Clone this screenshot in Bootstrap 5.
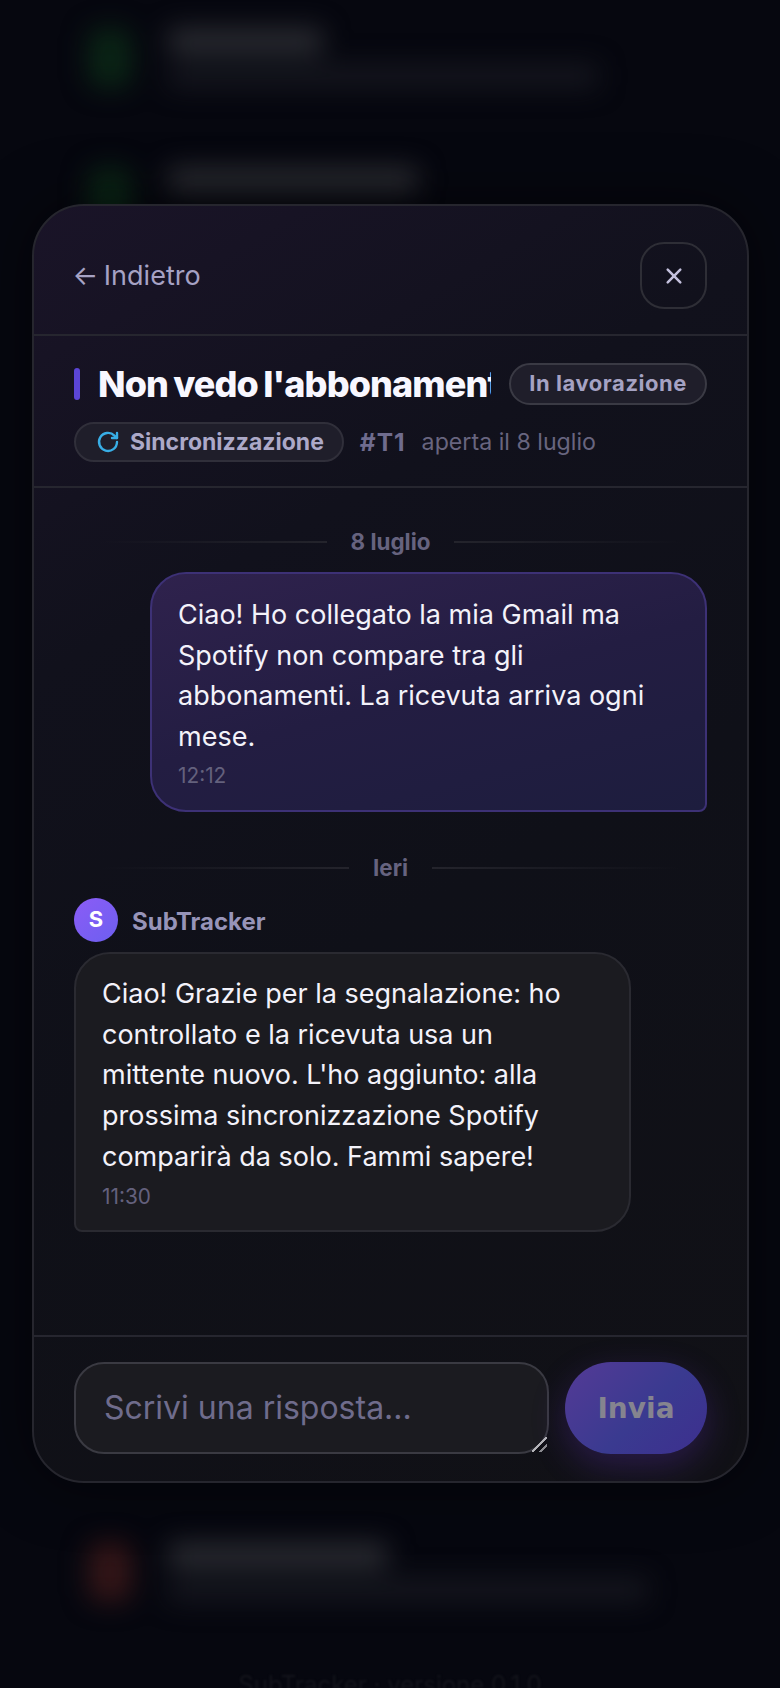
<!doctype html>
<html lang="it">
<head>
<meta charset="utf-8">
<title>SubTracker</title>
<link href="https://cdn.jsdelivr.net/npm/bootstrap@5.3.0/dist/css/bootstrap.min.css" rel="stylesheet">
<style>
html,body{height:100%;}
body{background:#06070f;font-family:"Inter","Noto Sans",sans-serif;color:#f4f3fb;overflow:hidden;}
.stage{width:780px;height:1688px;overflow:hidden;}
.behind{height:1688px;padding:28px 88px 0;filter:blur(13px);}
.b-row{gap:36px;height:76px;margin-bottom:63px;}
.b-icon{width:44px;height:60px;border-radius:14px;background:#0a2415;flex:none;}
.b-icon-red{background:#331517;}
.b-title{height:26px;background:#2a2b31;border-radius:6px;margin-bottom:10px;}
.b-sub{height:24px;background:#15161e;border-radius:6px;}
.b-spacer{height:1236px;}
.b-foot{position:absolute;left:0;right:0;top:1667px;text-align:center;font-size:24px;color:#13141b;filter:blur(1px);}
.overlay{position:absolute;left:32px;top:204px;width:717px;height:1279px;border-radius:52px;border:2px solid #26262e;
 background:linear-gradient(150deg,#1a1428 0%,#11111c 28%,#0f1018 55%,#111116 100%);overflow:hidden;box-shadow:0 0 60px rgba(0,0,0,.5);}
.m-head{height:130px;padding:12px 40px 0;border-bottom:2px solid #26262f;}
.m-back{font-size:27px;color:#a6a2c4;background:none;border:0;padding:0;}
.m-arrow{margin-left:-1.5px;margin-right:-2px;}
.m-close{width:67px;height:67px;border:2px solid #2e2e36;border-radius:24px;background:none;padding:0;}
.m-info{height:152px;padding:26px 40px 0;border-bottom:2px solid #26262f;}
.t-bar{width:6px;height:32px;border-radius:3px;background:#5b45d6;flex:none;margin-right:18px;}
.t-text{font-size:36px;font-weight:800;letter-spacing:-.025em;word-spacing:-.05em;color:#f8f7ff;white-space:nowrap;overflow:hidden;flex:1 1 0;min-width:0;line-height:44px;}
.t-state{flex:none;height:42px;margin-left:18px;border:2px solid #3a3a44;border-radius:21px;background:#1f1e2a;color:#a5a2c3;font-size:22px;font-weight:700;letter-spacing:.025em;padding:0 18px;display:flex;align-items:center;}
.meta{margin-top:16px;gap:16px;}
.m-chip{height:40px;border:2px solid #302f3a;border-radius:20px;background:#1f1e2a;padding:0 18px 0 20px;gap:10px;color:#aca9c8;font-size:23px;font-weight:700;}
.m-code{font-size:24.5px;font-weight:700;letter-spacing:.04em;color:#6f6c8e;}
.m-date{font-size:23.2px;color:#68657f;}
.m-body{height:848px;padding:0 40px;}
.d-sep{height:40px;gap:24px;font-size:22.4px;font-weight:700;color:#66637f;}
.d-sep i{flex:1;height:2px;background:linear-gradient(90deg,transparent 10%,#24242c);}
.d-sep i:last-child{background:linear-gradient(90deg,#24242c,transparent 90%);}
.sep1{margin-top:34px;}
.sep2{margin-top:36px;}
.bub{padding:21px 26px 18px;border-radius:36px;font-size:27px;line-height:40.8px;color:#f3f2fa;}
.bub-me{width:557px;margin-top:10px;margin-left:auto;height:240px;border:2px solid #3d3176;border-bottom-right-radius:8px;background:linear-gradient(165deg,#2f224d 0%,#231d42 50%,#1d1d3e 100%);}
.bub-them{width:557px;height:280px;padding-top:20px;border:2px solid #2a2a31;border-bottom-left-radius:8px;background:#1b1b20;}
.bub-t{font-size:20.8px;line-height:26px;color:#64617d;margin-top:5px;}
.bub-them .bub-t{margin-top:6px;}
.who{margin-top:10px;margin-bottom:10px;gap:14px;}
.ava{width:44px;height:44px;border-radius:50%;background:linear-gradient(140deg,#8b5cf6,#6d5ff0);color:#fff;font-size:22px;font-weight:700;}
.who-n{font-size:24px;font-weight:700;color:#9794b8;padding-top:4px;}
.m-foot{height:146px;padding:25px 40px 0;gap:16px;align-items:flex-start;border-top:2px solid #26262f;}
.m-input{flex:1;height:92px;padding:22px 28px 0;border:2px solid #3a3a42;border-radius:30px;background:#1b1b20;color:#fff;font-size:32px;line-height:44px;font-family:"Inter",sans-serif;resize:vertical;outline:0;}
.m-input::placeholder{color:#6f6c8c;opacity:1;}
.m-input::-webkit-resizer{background:linear-gradient(135deg,transparent 44%,#b4b4b8 44%,#b4b4b8 54%,transparent 54%,transparent 72%,#8c8c90 72%,#8c8c90 82%,transparent 82%);}
.m-send{width:142px;height:92px;flex:none;border:0;border-radius:46px;background:linear-gradient(135deg,#543a96,#3a3a90 55%,#3d2f8e);color:#85848f;font-family:"DejaVu Sans",sans-serif;font-size:28px;font-weight:700;box-shadow:0 12px 34px rgba(100,50,190,.3);padding:2px 0 0;}
</style>
</head>
<body>
<div class="stage position-relative">
  <div class="behind">
    <div class="b-row d-flex"><div class="b-icon"></div><div class="flex-grow-1"><div class="b-title" style="width:155px"></div><div class="b-sub" style="width:430px"></div></div></div>
    <div class="b-row d-flex"><div class="b-icon"></div><div class="flex-grow-1"><div class="b-title" style="width:250px"></div></div></div>
    <div class="b-spacer"></div>
    <div class="b-row d-flex"><div class="b-icon b-icon-red"></div><div class="flex-grow-1"><div class="b-title" style="width:220px"></div><div class="b-sub" style="width:480px"></div></div></div>
  </div>
  <div class="b-foot">SubTracker · versione 0.1.0</div>

  <div class="overlay d-flex flex-column">
    <div class="m-head d-flex align-items-center justify-content-between">
      <button class="m-back" type="button"><span class="m-arrow">←</span> Indietro</button>
      <button class="m-close d-flex align-items-center justify-content-center" type="button" aria-label="Chiudi">
        <svg width="18" height="18" viewBox="0 0 20 20" fill="none" stroke="#c3c0dc" stroke-width="2.8" stroke-linecap="round"><path d="M3 3L17 17M17 3L3 17"/></svg>
      </button>
    </div>
    <div class="m-info">
      <div class="d-flex align-items-center">
        <span class="t-bar"></span>
        <div class="t-text">Non vedo l'abbonamento</div>
        <span class="t-state">In lavorazione</span>
      </div>
      <div class="meta d-flex align-items-center">
        <span class="m-chip d-inline-flex align-items-center">
          <svg width="24" height="24" viewBox="0 0 24 24" fill="none" stroke="#38aee6" stroke-width="2.4" stroke-linecap="round" stroke-linejoin="round"><path d="M21 12a9 9 0 1 1-2.6-6.4L21 8"/><path d="M21 3v5h-5"/></svg>
          Sincronizzazione
        </span>
        <span class="m-code">#T1</span>
        <span class="m-date">aperta il 8 luglio</span>
      </div>
    </div>
    <div class="m-body">
      <div class="d-sep sep1 d-flex align-items-center"><i></i><span>8 luglio</span><i></i></div>
      <div class="bub bub-me">
        Ciao! Ho collegato la mia Gmail ma Spotify non compare tra gli abbonamenti. La ricevuta arriva ogni mese.
        <div class="bub-t">12:12</div>
      </div>
      <div class="d-sep sep2 d-flex align-items-center"><i></i><span>Ieri</span><i></i></div>
      <div class="who d-flex align-items-center">
        <span class="ava d-flex align-items-center justify-content-center">S</span>
        <span class="who-n">SubTracker</span>
      </div>
      <div class="bub bub-them">
        Ciao! Grazie per la segnalazione: ho controllato e la ricevuta usa un mittente nuovo. L'ho aggiunto: alla prossima sincronizzazione Spotify comparirà da solo. Fammi sapere!
        <div class="bub-t">11:30</div>
      </div>
    </div>
    <div class="m-foot d-flex">
      <textarea class="m-input" rows="1" placeholder="Scrivi una risposta..."></textarea>
      <button class="m-send" type="button">Invia</button>
    </div>
  </div>
</div>
<script src="https://cdn.jsdelivr.net/npm/bootstrap@5.3.0/dist/js/bootstrap.bundle.min.js"></script>
</body>
</html>
